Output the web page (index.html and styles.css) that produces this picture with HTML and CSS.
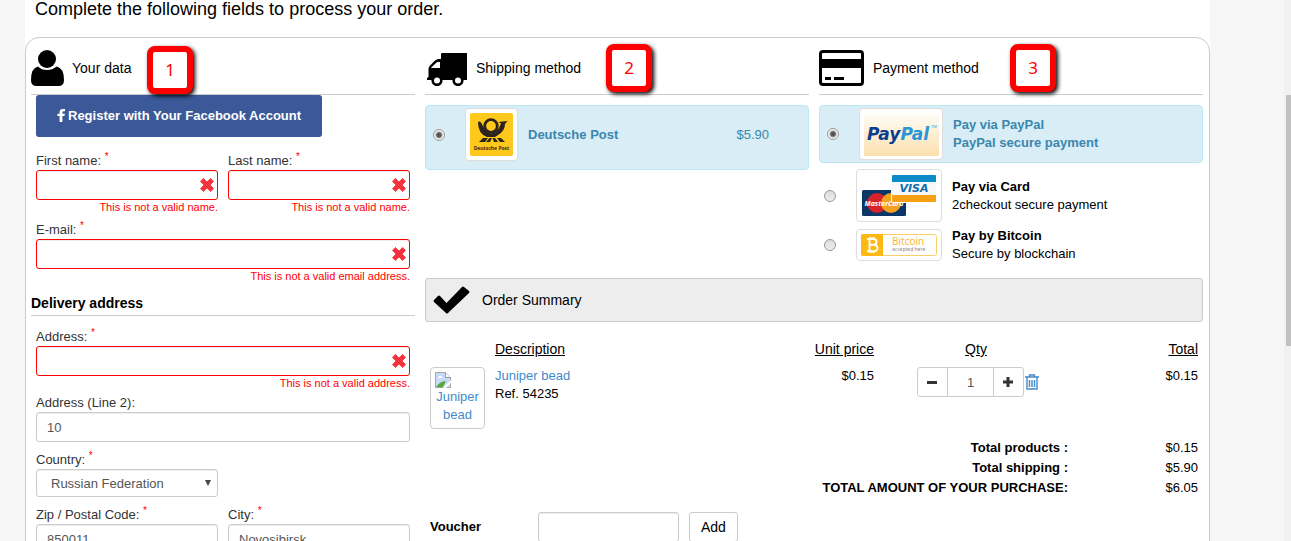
FILE: index.html
```html
<!DOCTYPE html>
<html lang="en">
<head>
    <meta charset="UTF-8">
    <meta name="viewport" content="width=device-width, initial-scale=1.0">
    <title>Checkout</title>
    <link rel="stylesheet" href="styles.css">
</head>
<body>

    <!-- Shared error cross -->
    <svg class="sprite" aria-hidden="true">
        <symbol id="cross" viewBox="0 0 14 14">
            <path d="M3.4 .4 7 4 10.6 .4 13.6 3.4 10 7 13.6 10.6 10.6 13.6 7 10 3.4 13.6 .4 10.6 4 7 .4 3.4Z" fill="#f5333f" stroke="#f5333f" stroke-width=".8" stroke-linejoin="round"/>
        </symbol>
    </svg>

    <main class="page">
        <p class="intro">Complete the following fields to process your order.</p>

        <div class="checkout">

            <!-- Customer data -->
            <section class="customer">
                <header class="step-header">
                    <svg width="33" height="36" viewBox="0 0 33 36" aria-hidden="true">
                        <ellipse cx="16" cy="9" rx="9" ry="9"/>
                        <path d="M7 16.500Q10.500 20 16 20T25.500 16.500Q33 18 33 30Q33 36 27.500 36H5.500Q0 36 0 30Q0 18 7 16.500Z"/>
                    </svg>
                    <h2>Your data</h2>
                    <span class="callout callout-data">1</span>
                </header>

                <form class="fields">
                    <button type="button" class="facebook">
                        <svg width="8" height="13" viewBox="0 0 8 13" aria-hidden="true"><path d="M8 .1V2.300H6.600Q5.400 2.300 5.400 3.400V4.800H7.900L7.500 7.100H5.400V13H2.600V7.100H.4V4.800H2.600V3Q2.600 0 5.800 0Z" fill="#fff"/></svg>
                        Register with Your Facebook Account
                    </button>
                    <div class="field-row">
                        <div class="field">
                            <label for="firstName">First name: <sup>*</sup></label>
                            <div class="control invalid"><input type="text" id="firstName"><svg><use href="#cross"/></svg></div>
                            <p class="error">This is not a valid name.</p>
                        </div>
                        <div class="field">
                            <label for="lastName">Last name: <sup>*</sup></label>
                            <div class="control invalid"><input type="text" id="lastName"><svg><use href="#cross"/></svg></div>
                            <p class="error">This is not a valid name.</p>
                        </div>
                    </div>
                    <div class="field">
                        <label for="email">E-mail: <sup>*</sup></label>
                        <div class="control invalid"><input type="email" id="email"><svg><use href="#cross"/></svg></div>
                        <p class="error">This is not a valid email address.</p>
                    </div>
                </form>

                <h3>Delivery address</h3>

                <form class="fields delivery">
                    <div class="field">
                        <label for="address">Address: <sup>*</sup></label>
                        <div class="control invalid"><input type="text" id="address"><svg><use href="#cross"/></svg></div>
                        <p class="error">This is not a valid address.</p>
                    </div>
                    <div class="field">
                        <label for="address2">Address (Line 2):</label>
                        <div class="control"><input type="text" id="address2" value="10"></div>
                    </div>
                    <div class="field-row">
                        <div class="field">
                            <label for="country">Country: <sup>*</sup></label>
                            <div class="control select">
                                <select id="country">
                                    <option>Russian Federation</option>
                                </select>
                                <svg viewBox="0 0 6 6"><path d="M0 0H6L3 6Z" fill="#444"/></svg>
                            </div>
                        </div>
                    </div>
                    <div class="field-row">
                        <div class="field">
                            <label for="zip">Zip / Postal Code: <sup>*</sup></label>
                            <div class="control"><input type="text" id="zip" value="850011"></div>
                        </div>
                        <div class="field">
                            <label for="city">City: <sup>*</sup></label>
                            <div class="control"><input type="text" id="city" value="Novosibirsk"></div>
                        </div>
                    </div>
                </form>
            </section>

            <!-- Shipping -->
            <section>
                <header class="step-header">
                    <svg width="43" height="36" viewBox="0 0 43 36" aria-hidden="true">
                        <path fill-rule="evenodd" d="M17 3H42V30H2V28L3.500 27V19Q3.500 17 5 15.500L10 10.500Q11.500 9 13.500 9H16V4Q16 3 17 3ZM6 18H15V12H13Q12 12 11 13L6.500 17.200Z"/>
                        <circle cx="12" cy="30.500" r="4.300" fill="#fff" stroke="#000" stroke-width="2.600"/>
                        <circle cx="33" cy="30.500" r="4.300" fill="#fff" stroke="#000" stroke-width="2.600"/>
                    </svg>
                    <h2>Shipping method</h2>
                    <span class="callout callout-shipping">2</span>
                </header>
                <label class="option selected shipping">
                    <input type="radio" name="shipping" checked>
                    <span class="thumb thumb-post">
                        <svg width="43" height="43" viewBox="0 0 43 43" aria-hidden="true">
                            <rect width="43" height="43" rx="2" fill="#ffc81c"/>
                            <path d="M8 9Q9.500 8 11 9.500L14 15Q16 20 21 20.500Q26 20 29 15L31 10.500 28.500 9 37.500 8 35 11Q35 18 28 22L25 24H17Q8 21 8 9Z" fill="#2b231c"/>
                            <circle cx="21" cy="13" r="6.300" fill="#ffc81c" stroke="#2b231c" stroke-width="2.800"/>
                            <path d="M13 25H18L15 29H9ZM19.500 25H22L20 29H16ZM22.500 25H25L28 29H24ZM27 25H31L35 29H30Z" fill="#2b231c"/>
                            <text x="21.500" y="37" text-anchor="middle" font-family="Noto Sans, sans-serif" font-size="5" font-weight="bold" fill="#3a2d12">Deutsche Post</text>
                        </svg>
                    </span>
                    <strong>Deutsche Post</strong>
                    <span class="price">$5.90</span>
                </label>
            </section>

            <!-- Payment -->
            <section>
                <header class="step-header">
                    <svg width="46" height="36" viewBox="0 0 46 36" aria-hidden="true">
                        <rect x="1.500" y="1.500" width="42" height="33" rx="2.500" fill="#fff" stroke="#000" stroke-width="3"/>
                        <path d="M1 9H44V18H1ZM6 27H12V30H6ZM15 27H25V30H15Z"/>
                    </svg>
                    <h2>Payment method</h2>
                    <span class="callout callout-payment">3</span>
                </header>
                <label class="option selected">
                    <input type="radio" name="payment" checked>
                    <span class="thumb thumb-paypal">
                        <svg width="75" height="43" viewBox="0 0 75 43" aria-hidden="true">
                            <defs>
                                <linearGradient id="cream" x2="0" y2="1"><stop stop-color="#fffdf8"/><stop offset="1" stop-color="#fce0ae"/></linearGradient>
                            </defs>
                            <rect width="75" height="43" fill="url(#cream)"/>
                            <text x="3" y="27" font-family="DejaVu Sans, sans-serif" font-size="17" font-weight="bold" font-style="italic" fill="#0b3d91">Pay<tspan fill="#2797d8">Pal</tspan></text>
                            <text x="67" y="15" font-family="Open Sans, sans-serif" font-size="4" fill="#2797d8">TM</text>
                        </svg>
                    </span>
                    <span><strong>Pay via PayPal<br>PayPal secure payment</strong></span>
                </label>
                <label class="option card">
                    <input type="radio" name="payment">
                    <span class="thumb thumb-card">
                        <svg width="76" height="43" viewBox="0 0 76 43" aria-hidden="true">
                            <rect x="1" y="16" width="44" height="26" rx="1.500" fill="#0b3768"/>
                            <circle cx="16" cy="29" r="10" fill="#d8222a"/>
                            <circle cx="30" cy="29" r="10" fill="#f5a01f"/>
                            <text x="23" y="32" text-anchor="middle" font-family="Open Sans, sans-serif" font-size="7" font-weight="bold" font-style="italic" fill="#fff">MasterCard</text>
                            <rect x="30" y="0" width="46" height="29" rx="2" fill="#fff"/>
                            <path d="M31 8V2Q31 1 32 1H74Q75 1 75 2V8Z" fill="#0b8cc8"/>
                            <path d="M31 8H75V21H31Z" fill="#f6f8fa"/>
                            <path d="M31 21H75V27Q75 28 74 28H32Q31 28 31 27Z" fill="#f8a014"/>
                            <text x="53" y="18" text-anchor="middle" font-family="DejaVu Sans, sans-serif" font-size="11" font-weight="bold" font-style="italic" fill="#0f6bac">VISA</text>
                        </svg>
                    </span>
                    <span><strong>Pay via Card</strong><br>2checkout secure payment</span>
                </label>
                <label class="option bitcoin">
                    <input type="radio" name="payment">
                    <span class="thumb thumb-bitcoin">
                        <svg width="76" height="22" viewBox="0 0 76 22" aria-hidden="true">
                            <rect x=".5" y=".5" width="75" height="21" rx="2" fill="#fff" stroke="#fbcf66"/>
                            <path d="M2 0H22V22H2Q0 22 0 20V2Q0 0 2 0Z" fill="#fdb913"/>
                            <path d="M6 5H12.500Q15.500 5 15.500 7.800T12.500 10.700H8.500M12.500 10.700Q16.500 10.700 16.500 14T12.500 17.200H6M8.500 5V17M9.500 3V5M12.500 3V5M9.500 17V19M12.500 17V19" fill="none" stroke="#fff" stroke-width="1.900"/>
                            <text x="31" y="11" font-family="Noto Sans, sans-serif" font-size="10" fill="#fdb933">Bitcoin</text>
                            <text x="31" y="17" font-family="Noto Sans, sans-serif" font-size="5" fill="#888">accepted here</text>
                        </svg>
                    </span>
                    <span><strong>Pay by Bitcoin</strong><br>Secure by blockchain</span>
                </label>
            </section>

            <!-- Order summary -->
            <section class="summary">
                <header class="summary-header">
                    <svg width="37" height="28" viewBox="0 0 37 28" aria-hidden="true"><path d="M1 14 5 10Q6 9 7 10L13.500 17 29 1Q30 0 31 1L36 5Q37 6 36 7L15 27Q14 28 13 27L1 16Q0 15 1 14Z"/></svg>
                    <h2>Order Summary</h2>
                </header>
                <table>
                    <colgroup>
                        <col class="col-image"><col><col class="col-price"><col class="col-qty"><col class="col-total">
                    </colgroup>
                    <thead>
                        <tr>
                            <th></th>
                            <th>Description</th>
                            <th class="right">Unit price</th>
                            <th class="center">Qty</th>
                            <th class="right">Total</th>
                        </tr>
                    </thead>
                    <tbody>
                        <tr class="item">
                            <td>
                                <a href="#" class="product-image">
                                    <svg width="16" height="16" viewBox="0 0 16 16" aria-hidden="true">
                                        <path d="M.5 .5H10.500L15.500 5.500V15.500H.5Z" fill="#c9daf7" stroke="#a5a5a5"/>
                                        <path d="M10.500 .5V5.500H15.500" fill="#fff" stroke="#999"/>
                                        <path d="M3 6Q3 4 5 4T7.500 6Z" fill="#fff"/>
                                        <path d="M1 15Q5 9 11 9L8 15Z" fill="#52aa3c"/>
                                        <path d="M16 8 8 16H11L16 11Z" fill="#fff"/>
                                    </svg>
                                    <span>Juniper bead</span>
                                </a>
                            </td>
                            <td><a href="#">Juniper bead</a><br>Ref. 54235</td>
                            <td class="right">$0.15</td>
                            <td>
                                <div class="quantity">
                                    <button type="button" aria-label="Less"><svg width="10" height="10" viewBox="0 0 10 10"><path d="M0 4H10V7H0Z" fill="#333"/></svg></button>
                                    <input type="text" value="1" aria-label="Quantity">
                                    <button type="button" aria-label="More"><svg width="10" height="10" viewBox="0 0 10 10"><path d="M0 3.500H3.500V0H6.500V3.500H10V6.500H6.500V10H3.500V6.500H0Z" fill="#333"/></svg></button>
                                    <a href="#" aria-label="Delete"><svg width="14" height="16" viewBox="0 0 14 16"><path d="M0 3H14M4.500 3V1H9.500V3M2 3V15H12V3M4.500 6V13M7 6V13M9.500 6V13" fill="none" stroke="#428bca" stroke-width="1.400"/></svg></a>
                                </div>
                            </td>
                            <td class="right">$0.15</td>
                        </tr>
                    </tbody>
                    <tfoot>
                        <tr><th colspan="4">Total products :</th><td>$0.15</td></tr>
                        <tr><th colspan="4">Total shipping :</th><td>$5.90</td></tr>
                        <tr><th colspan="4">TOTAL AMOUNT OF YOUR PURCHASE:</th><td>$6.05</td></tr>
                    </tfoot>
                </table>
                <form class="voucher">
                    <label for="voucher">Voucher</label>
                    <input type="text" id="voucher">
                    <button type="button">Add</button>
                </form>
            </section>
        </div>
    </main>

    <div class="scrollbar"><div class="scroll-thumb"></div></div>

</body>
</html>
```
FILE: styles.css
```css
* {
    box-sizing: border-box;
}
body {
    margin: 0;
    padding: 0 81px 0 25px;
    height: 100vh;
    overflow: hidden;
    background-color: #f6f6f6;
    font-family: "Liberation Sans", Arial, sans-serif;
    font-size: 13px;
    line-height: 18px;
    color: #000;
}
h2, h3, p {
    margin: 0;
}
a {
    color: #428bca;
    text-decoration: none;
}
input, select, button {
    font-family: inherit;
    font-size: 13px;
    color: #555;
}
svg {
    display: block;
    flex: none;
}
.sprite {
    position: absolute;
    width: 0;
    height: 0;
}
.page {
    min-height: 100vh;
    background-color: #fff;
}
.intro {
    padding: 0 10px 19px;
    font-size: 18px;
}
.checkout {
    display: grid;
    grid-template-columns: repeat(3, minmax(0, 1fr));
    grid-template-rows: auto 1fr;
    column-gap: 10px;
    padding: 0 6px 20px 5px;
    border: 1px solid #ccc;
    border-radius: 14px;
}
.customer {
    grid-row: span 2;
}

/* Step titles */
.step-header {
    position: relative;
    display: flex;
    align-items: center;
    gap: 8px;
    height: 57px;
    padding-top: 4px;
    border-bottom: 1px solid #ccc;
}
h2 {
    font-size: 14px;
    font-weight: normal;
}
.callout {
    position: absolute;
    top: 6px;
    width: 46px;
    height: 48px;
    border: 6px solid #f00;
    border-radius: 8px;
    background-color: #fff;
    box-shadow: 2px 2px 4px #000;
    color: #f00;
    font: 17px/36px "Noto Sans", sans-serif;
    text-align: center;
}
.callout-data {
    top: 8px;
    left: 116px;
}
.callout-shipping {
    left: 181px;
}
.callout-payment {
    left: 191px;
}

/* Customer form */
.fields {
    padding: 0 5px;
}
.facebook {
    display: flex;
    align-items: center;
    gap: 3px;
    height: 42px;
    margin-bottom: 15px;
    padding: 0 21px 2px;
    border: 0;
    border-radius: 3px;
    background-color: #3b5998;
    color: #fff;
    font-size: 13px;
    font-weight: bold;
}
.field-row {
    display: grid;
    grid-template-columns: 1fr 1fr;
    gap: 10px;
}
.field {
    margin-bottom: 7px;
}
.field label {
    display: block;
    color: #333;
}
sup {
    color: #f00;
    font-size: 10px;
    line-height: 0;
}
.control {
    position: relative;
}
.control input, .control select, .voucher input {
    display: block;
    width: 100%;
    height: 30px;
    padding: 0 10px;
    border: 1px solid #ccc;
    border-radius: 3px;
    background-color: #fff;
    box-shadow: inset 0 1px 1px rgba(0, 0, 0, 0.075);
}
.control select {
    height: 28px;
    padding-left: 14px;
    appearance: none;
}
.control svg {
    position: absolute;
    top: 8px;
    right: 4px;
    width: 14px;
    height: 14px;
    pointer-events: none;
}
.select svg {
    top: 11px;
    right: 7px;
    width: 6px;
    height: 6px;
}
.invalid input {
    border-color: #f00;
}
.error {
    color: #f00;
    font-size: 11px;
    line-height: 14px;
    text-align: right;
}
h3 {
    padding: 3px 0 2px;
    border-bottom: 1px solid #ccc;
    font-size: 14px;
    line-height: 20px;
}
.delivery {
    padding-top: 12px;
}
.delivery .field {
    margin-bottom: 9px;
}
.delivery .field:has(.error) {
    margin-bottom: 4px;
}

/* Shipping and payment choices */
.option {
    display: flex;
    align-items: center;
    padding-left: 5px;
}
.option.selected {
    height: 58px;
    margin-top: 10px;
    padding-left: 7px;
    border: 1px solid #bce8f1;
    border-radius: 4px;
    background-color: #d9edf7;
    color: #3a87ad;
}
.option.shipping {
    height: 65px;
    padding-bottom: 6px;
}
.option.card {
    margin-top: 6px;
}
.option.bitcoin {
    margin-top: 5px;
}
.option input {
    width: 12px;
    height: 12px;
    margin: 0 20px 0 0;
    flex: none;
    appearance: none;
    border: 1px solid #999;
    border-radius: 50%;
    background: linear-gradient(#ddd, #eee);
}
.option input:checked {
    background: radial-gradient(circle, #555 2px, #f2f2f2 4px);
}
.thumb {
    display: flex;
    align-items: center;
    justify-content: center;
    flex: none;
    margin-right: 10px;
    border: 1px solid #ddd;
    border-radius: 4px;
    background-color: #fff;
}
.thumb-post {
    width: 53px;
    height: 53px;
}
.thumb-paypal {
    width: 84px;
    height: 52px;
}
.thumb-card {
    width: 86px;
    height: 53px;
}
.thumb-bitcoin {
    width: 86px;
    height: 32px;
}
.price {
    margin-left: auto;
    padding-right: 39px;
}

/* Order summary */
.summary {
    grid-column: 2 / 4;
    margin-top: 15px;
}
.summary-header {
    display: flex;
    align-items: center;
    gap: 12px;
    height: 44px;
    padding-left: 7px;
    border: 1px solid #ccc;
    border-radius: 3px;
    background-color: #ededed;
}
table {
    width: calc(100% - 10px);
    margin: 18px 5px 14px;
    table-layout: fixed;
    border-collapse: collapse;
}
.col-image {
    width: 65px;
}
.col-price {
    width: 130px;
}
.col-qty {
    width: 204px;
}
.col-total {
    width: 120px;
}
th, td {
    padding: 0;
    text-align: left;
    vertical-align: top;
}
thead th {
    padding-bottom: 9px;
    font-size: 14px;
    font-weight: normal;
    text-decoration: underline;
}
.right, tfoot td {
    text-align: right;
}
.center {
    text-align: center;
}
.item td {
    height: 71px;
}
tfoot th {
    padding-right: 10px;
    text-align: right;
}
tfoot td, tfoot th {
    line-height: 20px;
}
.product-image {
    display: block;
    width: 55px;
    height: 62px;
    padding: 4px;
    border: 1px solid #ccc;
    border-radius: 4px;
    text-align: center;
}
.quantity {
    display: flex;
    align-items: center;
    justify-content: center;
    padding-left: 4px;
}
.quantity button, .quantity input {
    width: 31px;
    height: 30px;
    padding: 0 9px;
    border: 1px solid #ccc;
    border-radius: 3px 0 0 3px;
    background-color: #fff;
}
.quantity input {
    width: 45px;
    border-width: 1px 0;
    border-radius: 0;
    text-align: center;
}
.quantity input + button {
    border-radius: 0 3px 3px 0;
}
.quantity a {
    margin-left: 1px;
}
.voucher {
    display: flex;
    align-items: center;
    gap: 10px;
    padding-left: 5px;
}
.voucher label {
    width: 98px;
    font-weight: bold;
}
.voucher input {
    width: 141px;
}
.voucher button {
    height: 30px;
    padding: 0 11px;
    border: 1px solid #ccc;
    border-radius: 3px;
    background-color: #fff;
    color: #000;
    font-size: 14px;
}

/* Page scrollbar */
.scrollbar {
    position: fixed;
    top: 0;
    right: 0;
    bottom: 0;
    width: 7px;
    padding: 95px 0 0 2px;
    background-color: #f1f1f1;
}
.scroll-thumb {
    height: 251px;
    background-color: #c1c1c1;
}
```
